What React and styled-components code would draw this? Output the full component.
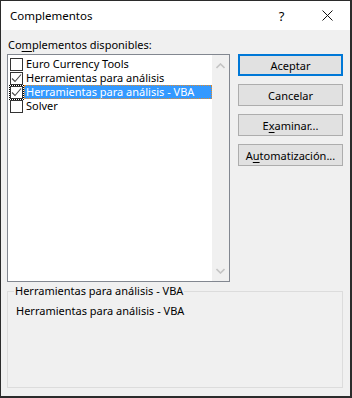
import React from 'react';
import styled, { createGlobalStyle } from 'styled-components';

const Global = createGlobalStyle`
  html, body { margin: 0; padding: 0; background: #f0f0f0; }
  * { box-sizing: border-box; }
`;

const items = [
  { name: 'Euro Currency Tools', checked: false },
  { name: 'Herramientas para análisis', checked: true },
  { name: 'Herramientas para análisis - VBA', checked: true, selected: true },
  { name: 'Solver', checked: false },
];

function App() {
  return (
    <>
      <Global />
      <Window>
        <TitleBar>
          <Title>Complementos</Title>
          <TitleButton>?</TitleButton>
          <TitleButton>
            <svg width="11" height="11" viewBox="0 0 11 11">
              <path d="M0.5 0.5 L10.5 10.5 M10.5 0.5 L0.5 10.5" stroke="#111" strokeWidth="1" fill="none" />
            </svg>
          </TitleButton>
        </TitleBar>

        <Body>
          <Top>
            <LeftCol>
              <Label>
                Co<u>m</u>plementos disponibles:
              </Label>
              <ListBox>
                <Rows>
                  {items.map((it) => (
                    <Row key={it.name}>
                      <Check focused={it.selected}>
                        {it.checked && (
                          <svg width="11" height="11" viewBox="0 0 11 11">
                            <path d="M1 5.5 L4 8.5 L10 1.5" stroke="#444" strokeWidth="1.1" fill="none" />
                          </svg>
                        )}
                      </Check>
                      <ItemText selected={it.selected}>{it.name}</ItemText>
                    </Row>
                  ))}
                </Rows>
                <ScrollBar>
                  <svg width="9" height="6" viewBox="0 0 9 6">
                    <path d="M0.5 5 L4.5 1 L8.5 5" stroke="#c4c4c4" strokeWidth="1.6" fill="none" />
                  </svg>
                  <svg width="9" height="6" viewBox="0 0 9 6">
                    <path d="M0.5 1 L4.5 5 L8.5 1" stroke="#c4c4c4" strokeWidth="1.6" fill="none" />
                  </svg>
                </ScrollBar>
              </ListBox>
            </LeftCol>

            <Buttons>
              <Button primary>Aceptar</Button>
              <Button>Cancelar</Button>
              <Button>
                E<u>x</u>aminar...
              </Button>
              <Button>
                A<u>u</u>tomatización...
              </Button>
            </Buttons>
          </Top>

          <Group>
            <Legend>Herramientas para análisis - VBA</Legend>
            <Description>Herramientas para análisis - VBA</Description>
          </Group>
        </Body>
      </Window>
    </>
  );
}

export default App;

const Window = styled.div`
  width: 352px;
  height: 398px;
  border: 1px solid #2b2b2b;
  border-right-width: 2px;
  border-bottom-width: 2px;
  background: #f0f0f0;
  display: flex;
  flex-direction: column;
  font-family: "Noto Sans", "Open Sans", sans-serif;
  font-size: 11px;
  color: #000;
`;

const TitleBar = styled.div`
  height: 29px;
  background: #fff;
  display: flex;
  align-items: center;
  padding-left: 9px;
`;

const Title = styled.div`
  flex: 1;
  font-size: 11.5px;
`;

const TitleButton = styled.div`
  width: 45px;
  height: 29px;
  display: flex;
  align-items: center;
  justify-content: center;
  font-size: 13px;
  &:last-child {
    width: 46px;
  }
`;

const Body = styled.div`
  flex: 1;
  padding: 7px 7px 0 6px;
  display: flex;
  flex-direction: column;
`;

const Top = styled.div`
  display: flex;
  gap: 8px;
`;

const LeftCol = styled.div`
  width: 223px;
  display: flex;
  flex-direction: column;
`;

const Label = styled.div`
  line-height: 16px;
  height: 17px;
  padding-left: 1px;
  u { text-decoration-thickness: 1px; text-underline-offset: 2px; }
`;

const ListBox = styled.div`
  height: 228px;
  border: 1px solid #828790;
  background: #fff;
  display: flex;
`;

const Rows = styled.div`
  flex: 1;
  padding-top: 2px;
  padding-left: 2px;
`;

const Row = styled.div`
  height: 14px;
  display: flex;
  align-items: center;
`;

const Check = styled.div`
  width: 13px;
  height: 13px;
  flex: none;
  border: 1px solid #333;
  background: #fff;
  display: flex;
  align-items: center;
  justify-content: center;
  outline: ${(p) => (p.focused ? '1px dotted #000' : 'none')};
  outline-offset: 0px;
`;

const ItemText = styled.div`
  flex: 1;
  height: 14px;
  line-height: 14px;
  margin-left: 1px;
  padding-left: 2px;
  white-space: nowrap;
  background: ${(p) => (p.selected ? '#3399ff' : 'transparent')};
  color: ${(p) => (p.selected ? '#fff' : '#000')};
  outline: ${(p) => (p.selected ? '1px dotted #e08a2c' : 'none')};
  outline-offset: -1px;
`;

const ScrollBar = styled.div`
  width: 17px;
  background: #f0f0f0;
  display: flex;
  flex-direction: column;
  justify-content: space-between;
  align-items: center;
  padding: 8px 0 7px;
`;

const Buttons = styled.div`
  width: 105px;
  padding-top: 17px;
  display: flex;
  flex-direction: column;
  gap: 8px;
`;

const Button = styled.div`
  height: 22px;
  background: #e1e1e1;
  border: ${(p) => (p.primary ? '2px solid #0078d7' : '1px solid #adadad')};
  display: flex;
  align-items: center;
  justify-content: center;
  u { text-decoration-thickness: 1px; text-underline-offset: 2px; }
`;

const Group = styled.fieldset`
  margin: 1px 0 0 0;
  height: 105px;
  border: 1px solid #dcdcdc;
  padding: 0 6px;
`;

const Legend = styled.legend`
  padding: 0 1px;
  line-height: 16px;
`;

const Description = styled.div`
  margin: 4px 0 0 2px;
  line-height: 16px;
`;
